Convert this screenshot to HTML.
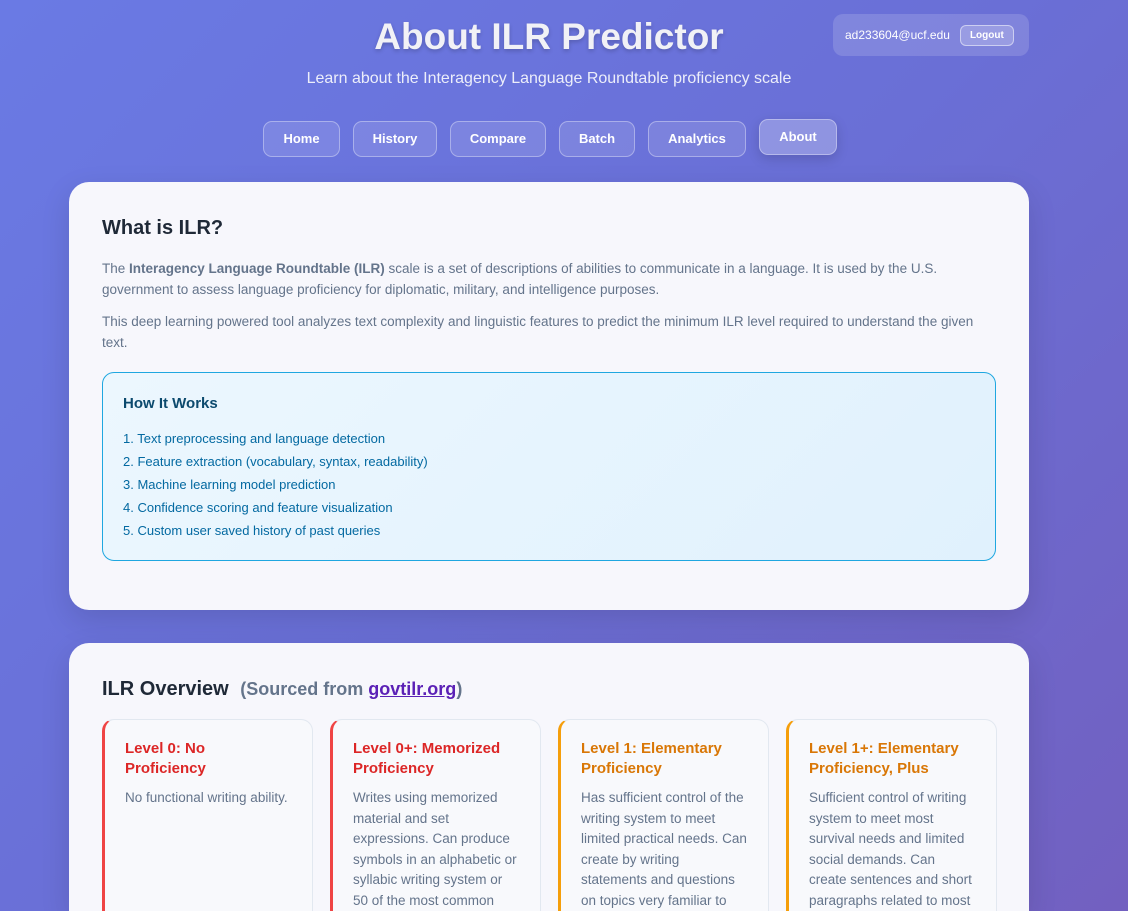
<!DOCTYPE html>
<html><head><meta charset="utf-8"><style>
*{box-sizing:border-box;margin:0;padding:0}
html,body{width:1128px;height:911px;overflow:hidden}
body{font-family:"Liberation Sans",sans-serif;background:linear-gradient(135deg,#6a7ae4 0%,#6a6fd6 50%,#7260c0 100%);position:relative}
h1{position:absolute;left:0;width:1098px;text-align:center;top:16px;font-size:37px;color:#f1f1f6;font-weight:bold;text-shadow:0 2px 4px rgba(0,0,0,.2)}
.sub{position:absolute;left:0;width:1098px;text-align:center;top:70px;font-size:16px;color:#eceefa}
.user{position:absolute;left:833px;top:14px;width:196px;height:42px;border-radius:10px;background:rgba(255,255,255,.15);font-size:12px;color:#fff;display:flex;align-items:center;padding-left:12px}
.user span.b{margin-left:10px;border:1px solid rgba(255,255,255,.5);background:rgba(255,255,255,.2);border-radius:6px;font-size:10px;padding:4px 9px;font-weight:bold}
.nav{position:absolute;top:121px;left:263px;display:flex;gap:13px}
.nav div{height:36px;border:1px solid rgba(255,255,255,.35);background:rgba(255,255,255,.12);border-radius:9px;color:#fff;font-size:13px;font-weight:bold;line-height:34px;text-align:center}
.nav div.a{background:rgba(255,255,255,.25);margin-top:-2px;box-shadow:0 4px 12px rgba(0,0,0,.15)}
.card{position:absolute;left:69px;width:960px;background:#f7f7fc;border-radius:20px;padding:33px;box-shadow:0 10px 30px rgba(0,0,0,.12)}
h2{font-size:20px;color:#1f2937;font-weight:bold}
p{font-size:13.5px;line-height:20.5px;color:#64748b}
.how{margin-top:19px;height:189px;border:1px solid #1fa7e0;border-radius:12px;background:linear-gradient(135deg,#ecf7fe,#e0f1fd);padding:22px 20px}
.how h3{font-size:15px;color:#0c4a6e;margin-bottom:15px}
.how div{font-size:13px;color:#0369a1;line-height:23px}
.grid{position:absolute;top:76px;left:33px;display:flex;gap:17px}
.lv{width:211px;height:240px;border:1px solid #e2e8f0;border-left:3px solid #ef4444;border-radius:12px;padding:19px 20px;background:#f8f9fc}
.lv h4{font-size:15px;line-height:19.5px;margin-bottom:10px;color:#dc2626}
.lv.o{border-left-color:#f59e0b}.lv.o h4{color:#d97706}
.lv p{line-height:20.5px}
</style></head><body>
<h1>About ILR Predictor</h1>
<div class="sub">Learn about the Interagency Language Roundtable proficiency scale</div>
<div class="user">ad233604@ucf.edu<span class="b">Logout</span></div>
<div class="nav"><div style="width:77px">Home</div><div style="width:84px">History</div><div style="width:96px">Compare</div><div style="width:76px">Batch</div><div style="width:98px">Analytics</div><div class="a" style="width:78px">About</div></div>
<div class="card" style="top:182px;height:428px">
<h2 style="margin-top:2px">What is ILR?</h2>
<p style="margin-top:19px">The <b>Interagency Language Roundtable (ILR)</b> scale is a set of descriptions of abilities to communicate in a language. It is used by the U.S. government to assess language proficiency for diplomatic, military, and intelligence purposes.</p>
<p style="margin-top:12px">This deep learning powered tool analyzes text complexity and linguistic features to predict the minimum ILR level required to understand the given text.</p>
<div class="how"><h3>How It Works</h3>
<div>1. Text preprocessing and language detection</div>
<div>2. Feature extraction (vocabulary, syntax, readability)</div>
<div>3. Machine learning model prediction</div>
<div>4. Confidence scoring and feature visualization</div>
<div>5. Custom user saved history of past queries</div></div>
</div>
<div class="card" style="top:643px;height:268px;border-radius:20px 20px 0 0">
<h2 style="margin-top:2px">ILR Overview <span style="color:#64748b;font-size:18px;margin-left:6px">(Sourced from <u style="color:#5b21b6">govtilr.org</u>)</span></h2>
<div class="grid">
<div class="lv" style="height:192px;border-bottom:none;border-radius:12px 12px 0 0"><h4>Level 0: No<br>Proficiency</h4><p>No functional writing ability.</p></div>
<div class="lv" style="height:192px;border-bottom:none;border-radius:12px 12px 0 0"><h4>Level 0+: Memorized Proficiency</h4><p>Writes using memorized material and set expressions. Can produce symbols in an alphabetic or syllabic writing system or 50 of the most common</p></div>
<div class="lv o" style="height:192px;border-bottom:none;border-radius:12px 12px 0 0"><h4>Level 1: Elementary Proficiency</h4><p>Has sufficient control of the writing system to meet limited practical needs. Can create by writing statements and questions on topics very familiar to</p></div>
<div class="lv o" style="height:192px;border-bottom:none;border-radius:12px 12px 0 0;overflow:hidden"><h4>Level 1+: Elementary Proficiency, Plus</h4><p>Sufficient control of writing system to meet most survival needs and limited social demands. Can create sentences and short paragraphs related to most</p></div>
</div></div>
</body></html>
